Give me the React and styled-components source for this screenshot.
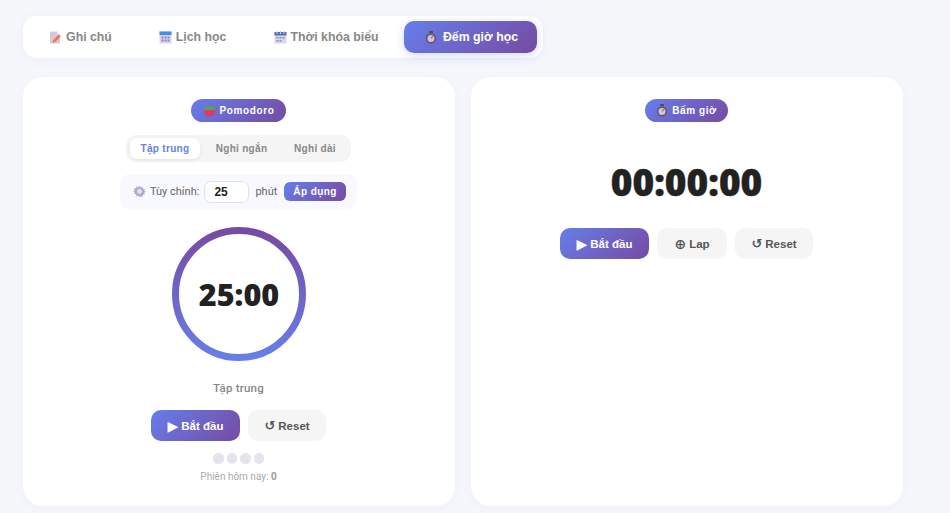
import React from "react";
import styled, { createGlobalStyle } from "styled-components";

const Global = createGlobalStyle`
  html, body { margin: 0; padding: 0; background: #f5f7fb; overflow: hidden; }
  body { font-family: "Roboto", "Liberation Sans", sans-serif; }
  * { box-sizing: border-box; }
`;
const Page = styled.div`
  width: 950px; height: 513px; padding: 16px 47px 0 23px;
  display: flex; flex-direction: column; gap: 19px; overflow: hidden;
`;
const TabBar = styled.nav`
  align-self: flex-start; display: flex; gap: 4px; padding: 5px 6px 5px 5px; height: 42px;
  background: #fff; border-radius: 14px; box-shadow: 0 2px 12px rgba(102,126,234,.08);
`;
const Tab = styled.div`
  width: ${p => p.$w}px; height: 32px; display: flex; align-items: center; justify-content: center;
  gap: ${p => (p.$active ? 6 : 4)}px;
  padding-left: ${p => (p.$active ? 2 : 0)}px;
  border-radius: 10px; font-size: 12.3px; font-weight: 700; font-family: "Liberation Sans", sans-serif;
  color: ${p => (p.$active ? "#fff" : "#888")};
  background: ${p => (p.$active ? "linear-gradient(135deg,#667eea,#764ba2)" : "transparent")};
  box-shadow: ${p => (p.$active ? "0 2px 8px rgba(102,126,234,.3)" : "none")};
`;
const Cards = styled.div`
  display: grid; grid-template-columns: 432px 432px; gap: 16px;
`;
const Card = styled.section`
  height: 429px; background: #fff; border-radius: 20px; padding: 22px 1px 0 0;
  display: flex; flex-direction: column; align-items: center;
  box-shadow: 0 2px 12px rgba(102,126,234,.05);
`;
const Badge = styled.div`
  height: 23px; width: ${p => p.$w}px; display: flex; align-items: center; justify-content: center; gap: 4px;
  border-radius: 12px; background: linear-gradient(135deg,#667eea,#764ba2);
  color: #fff; font-size: 10px; font-weight: 700; letter-spacing: .6px;
  font-family: "Liberation Sans", sans-serif;
`;
const Modes = styled.div`
  margin-top: 13px; height: 27px; width: 225px; padding: 3px 4px; display: flex; align-items: center;
  background: #f5f5f5; border-radius: 10px;
`;
const Mode = styled.div`
  height: 21px; width: ${p => p.$w}px; display: flex; align-items: center; justify-content: center;
  border-radius: 7px; font-size: 10px; font-weight: 700; letter-spacing: .3px; font-family: "Liberation Sans", sans-serif;
  color: ${p => (p.$active ? "#667eea" : "#888")};
  background: ${p => (p.$active ? "#fff" : "transparent")};
  box-shadow: ${p => (p.$active ? "0 1px 4px rgba(0,0,0,.08)" : "none")};
`;
const Custom = styled.div`
  margin-top: 12px; width: 237px; height: 35px; padding: 0 11px 0 13px; display: flex; align-items: center;
  background: #f8f9ff; border-radius: 10px; font-size: 11px; color: #666; white-space: nowrap;
`;
const CustomLabel = styled.span`
  margin-left: 4px; color: #666;
`;
const MinuteInput = styled.div`
  width: 45px; height: 22px; flex: none; margin: 0 6px 0 5px; padding-left: 9px; border: 1px solid #e0e0ee; border-radius: 7px; background: #fff;
  display: flex; align-items: center; font-size: 12px; font-weight: 700; color: #222;
  font-family: "Liberation Sans", sans-serif;
`;
const Apply = styled.div`
  margin-left: auto; width: 62px; height: 19px; flex: none; border-radius: 6px; display: flex; align-items: center; justify-content: center;
  background: linear-gradient(135deg,#667eea,#764ba2); color: #fff; font-size: 10px; font-weight: 700; letter-spacing: .4px;
  font-family: "Liberation Sans", sans-serif;
`;
const Ring = styled.div`
  position: relative; margin-top: 18px; left: .5px; width: 134px; height: 134px;
`;
const RingTime = styled.div`
  position: absolute; inset: 0; display: flex; align-items: center; justify-content: center;
  font-family: "Open Sans", sans-serif; font-weight: 800; font-size: 30.5px; color: #222;
`;
const PhaseLabel = styled.div`
  margin-top: 20px; font-size: 11.5px; font-weight: 500; color: #888; line-height: 14px; letter-spacing: .2px;
`;
const Actions = styled.div`
  display: flex; gap: 8px; margin-top: ${p => p.$top}px;
`;
const Btn = styled.div`
  height: 31px; width: ${p => p.$w}px; border-radius: 10px; display: flex; align-items: center; justify-content: center; gap: 3px;
  font-size: 11.5px; font-weight: 700; font-family: "Liberation Sans", sans-serif;
  color: ${p => (p.$primary ? "#fff" : "#555")};
  background: ${p => (p.$primary ? "linear-gradient(135deg,#667eea,#764ba2)" : "#f5f5f5")};
`;
const Glyph = styled.span`
  font-family: "DejaVu Sans", sans-serif; font-size: ${p => p.$size}px; line-height: 1; font-weight: 700;
`;
const Dots = styled.div`
  display: flex; gap: 3px; margin-top: 12px;
`;
const Dot = styled.span`
  width: 10.5px; height: 10.5px; border-radius: 50%; background: #e4e4ec;
`;
const Sessions = styled.div`
  margin-top: 7px; font-size: 10px; color: #aaa; line-height: 12px;
  b { color: #999; }
`;
const BigTime = styled.div`
  margin-top: 36px; font-family: "Open Sans", sans-serif; font-weight: 800; font-size: 37px; line-height: 48px; color: #222;
  -webkit-text-stroke: .4px #222;
`;

const Note = () => (<svg width="13" height="13" viewBox="0 0 13 13"><path d="M1 0.5h7l3 3v9H1z" fill="#d3c8dc"/><path d="M8 .5l3 3H8z" fill="#ece6f0"/><path d="M3.5 11.5l.7-2.6 5.6-5.4 2 2-5.6 5.4z" fill="#ee7a45"/></svg>);
const Calendar = () => (<svg width="13" height="13" viewBox="0 0 13 13"><rect x=".5" y=".5" width="12" height="12" fill="#dcd4ee"/><rect x=".5" y=".5" width="12" height="3.5" fill="#3d8fee"/><g fill="#8f88a8"><rect x="2.5" y="5.5" width="2" height="2"/><rect x="5.5" y="5.5" width="2" height="2"/><rect x="8.5" y="5.5" width="2" height="2"/><rect x="2.5" y="8.5" width="2" height="2"/><rect x="5.5" y="8.5" width="2" height="2"/><rect x="8.5" y="8.5" width="2" height="2"/></g></svg>);
const Spiral = () => (<svg width="13" height="13" viewBox="0 0 13 13"><rect x=".5" y="1" width="12" height="11.5" rx="1" fill="#d9d8ea"/><rect x=".5" y="1" width="12" height="3.5" fill="#5470b8"/><path d="M3 0v3M6.5 0v3M10 0v3" stroke="#c9c9d6"/><g fill="#8d93b8"><rect x="2.5" y="6" width="2" height="1.6"/><rect x="5.5" y="6" width="2" height="1.6"/><rect x="8.5" y="6" width="2" height="1.6"/><rect x="2.5" y="9" width="2" height="1.6"/><rect x="5.5" y="9" width="2" height="1.6"/></g></svg>);
const Watch = () => (<svg width="12" height="13" viewBox="0 0 13 14"><rect x="4.5" y="0" width="4" height="2" fill="#4d4558"/><circle cx="6.5" cy="8" r="5.6" fill="#5d5470"/><circle cx="6.5" cy="8" r="3.8" fill="#cfc6da"/><path d="M6.5 8L8.7 5.4" stroke="#d8584a" strokeWidth="1.3"/></svg>);
const Tomato = () => (<svg width="13" height="12" viewBox="0 0 13 12"><path d="M.8 3.5h11.4c.5 4.6-1.8 8-5.7 8S.3 8.1.8 3.5z" fill="#dc3a63"/><path d="M1 1c1 .8 2 .8 2.6.2.8.7 1.6.7 2.9 0 1.3.7 2.1.7 2.9 0 .6.6 1.6.6 2.6-.2v4c-1 .7-2 .2-2.6-.2-.9.6-2 .6-2.9 0-.9.6-2 .6-2.9 0-.6.4-1.6.9-2.6.2z" fill="#5da05a"/></svg>);
const Gear = () => (<svg width="13" height="13" viewBox="0 0 24 24"><path d="M12 1l2 3.4 3.6-1.4.6 3.9 3.9.6-1.4 3.6L24 12l-3.3 1.9 1.4 3.6-3.9.6-.6 3.9-3.6-1.4L12 23l-2-3.4-3.6 1.4-.6-3.9-3.9-.6 1.4-3.6L0 12l3.3-1.9L1.9 6.5l3.9-.6.6-3.9L10 4.4z" fill="#b3a9c6"/><circle cx="12" cy="12" r="4.5" fill="#e5e1ee"/></svg>);

export default function App() {
  return (
    <Page>
      <Global />
      <TabBar>
        <Tab $w={105}><Note />Ghi chú</Tab>
        <Tab $w={111}><Calendar />Lịch học</Tab>
        <Tab $w={148}><Spiral />Thời khóa biểu</Tab>
        <Tab $w={133} $active><Watch />Đếm giờ học</Tab>
      </TabBar>
      <Cards>
        <Card>
          <Badge $w={95}><Tomato />Pomodoro</Badge>
          <Modes>
            <Mode $w={70} $active>Tập trung</Mode>
            <Mode $w={83}>Nghỉ ngắn</Mode>
            <Mode $w={64}>Nghỉ dài</Mode>
          </Modes>
          <Custom>
            <Gear /><CustomLabel>Tùy chỉnh:</CustomLabel>
            <MinuteInput>25</MinuteInput>
            phút
            <Apply>Áp dụng</Apply>
          </Custom>
          <Ring>
            <svg width="134" height="134" viewBox="0 0 134 134">
              <defs>
                <linearGradient id="ringGrad" x1="0" y1="1" x2="0" y2="0">
                  <stop offset="0" stopColor="#667eea" />
                  <stop offset="1" stopColor="#764ba2" />
                </linearGradient>
              </defs>
              <circle cx="67" cy="67" r="63.5" fill="none" stroke="url(#ringGrad)" strokeWidth="7" />
            </svg>
            <RingTime>25:00</RingTime>
          </Ring>
          <PhaseLabel>Tập trung</PhaseLabel>
          <Actions $top={15}>
            <Btn $primary $w={89}><Glyph $size={14}>▶</Glyph>Bắt đầu</Btn>
            <Btn $w={78}><Glyph $size={13}>↺</Glyph>Reset</Btn>
          </Actions>
          <Dots><Dot /><Dot /><Dot /><Dot /></Dots>
          <Sessions>Phiên hôm nay: <b>0</b></Sessions>
        </Card>
        <Card>
          <Badge $w={83}><Watch />Bấm giờ</Badge>
          <BigTime>00:00:00</BigTime>
          <Actions $top={22}>
            <Btn $primary $w={89}><Glyph $size={14}>▶</Glyph>Bắt đầu</Btn>
            <Btn $w={70}><Glyph $size={14}>⊕</Glyph>Lap</Btn>
            <Btn $w={78}><Glyph $size={13}>↺</Glyph>Reset</Btn>
          </Actions>
        </Card>
      </Cards>
    </Page>
  );
}
